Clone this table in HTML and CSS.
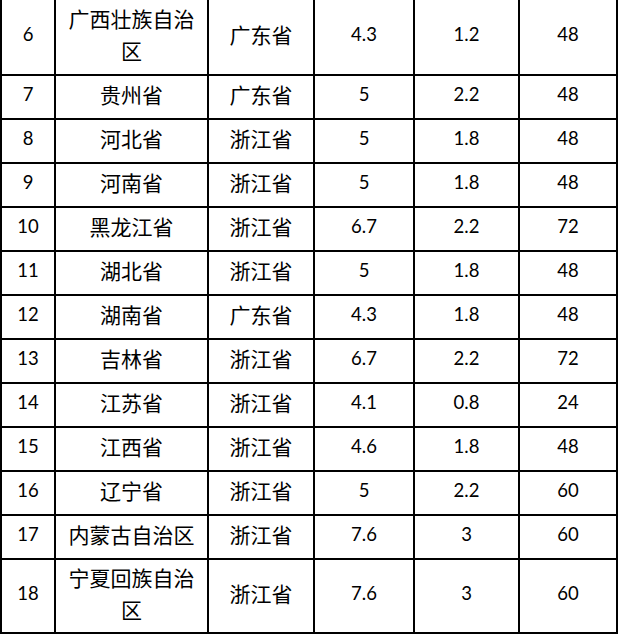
FILE: index.html
```html
<!DOCTYPE html>
<html lang="zh-CN">
<head>
<meta charset="utf-8">
<title>省份表</title>
<link rel="stylesheet" href="styles.css">
</head>
<body>
<table class="grid">
  <colgroup>
    <col class="c1"><col class="c2"><col class="c3"><col class="c4"><col class="c5"><col class="c6">
  </colgroup>
  <tbody>
    <tr class="tall first"><td class="num">6</td><td class="cjk">广西壮族自治区</td><td class="cjk">广东省</td><td class="num">4.3</td><td class="num">1.2</td><td class="num">48</td></tr>
    <tr><td class="num">7</td><td class="cjk">贵州省</td><td class="cjk">广东省</td><td class="num">5</td><td class="num">2.2</td><td class="num">48</td></tr>
    <tr><td class="num">8</td><td class="cjk">河北省</td><td class="cjk">浙江省</td><td class="num">5</td><td class="num">1.8</td><td class="num">48</td></tr>
    <tr><td class="num">9</td><td class="cjk">河南省</td><td class="cjk">浙江省</td><td class="num">5</td><td class="num">1.8</td><td class="num">48</td></tr>
    <tr><td class="num">10</td><td class="cjk">黑龙江省</td><td class="cjk">浙江省</td><td class="num">6.7</td><td class="num">2.2</td><td class="num">72</td></tr>
    <tr><td class="num">11</td><td class="cjk">湖北省</td><td class="cjk">浙江省</td><td class="num">5</td><td class="num">1.8</td><td class="num">48</td></tr>
    <tr><td class="num">12</td><td class="cjk">湖南省</td><td class="cjk">广东省</td><td class="num">4.3</td><td class="num">1.8</td><td class="num">48</td></tr>
    <tr><td class="num">13</td><td class="cjk">吉林省</td><td class="cjk">浙江省</td><td class="num">6.7</td><td class="num">2.2</td><td class="num">72</td></tr>
    <tr><td class="num">14</td><td class="cjk">江苏省</td><td class="cjk">浙江省</td><td class="num">4.1</td><td class="num">0.8</td><td class="num">24</td></tr>
    <tr><td class="num">15</td><td class="cjk">江西省</td><td class="cjk">浙江省</td><td class="num">4.6</td><td class="num">1.8</td><td class="num">48</td></tr>
    <tr><td class="num">16</td><td class="cjk">辽宁省</td><td class="cjk">浙江省</td><td class="num">5</td><td class="num">2.2</td><td class="num">60</td></tr>
    <tr><td class="num">17</td><td class="cjk">内蒙古自治区</td><td class="cjk">浙江省</td><td class="num">7.6</td><td class="num">3</td><td class="num">60</td></tr>
    <tr class="tall last"><td class="num">18</td><td class="cjk">宁夏回族自治区</td><td class="cjk">浙江省</td><td class="num">7.6</td><td class="num">3</td><td class="num">60</td></tr>
  </tbody>
</table>
</body>
</html>
```
FILE: styles.css
```css
html, body {
  margin: 0;
  padding: 0;
  background: #fff;
}

.grid {
  border-collapse: collapse;
  table-layout: fixed;
  width: 618px;
  border: 2px solid #000;
  border-top: none;
  color: #000;
}

.c1 { width: 54px; }
.c2 { width: 153px; }
.c3 { width: 106px; }
.c4 { width: 100px; }
.c5 { width: 105px; }
.c6 { width: 98px; }

.grid td {
  border: 2px solid #000;
  padding: 0 6px 6px;
  text-align: center;
  vertical-align: middle;
  height: 36px;
}

.grid tr.first td {
  border-top: none;
}

.grid tr.tall td {
  height: 68px;
}

.grid tr.last td {
  height: 66px;
}

.cjk {
  font-family: "Noto Sans CJK SC", "Noto Sans", sans-serif;
  font-size: 21px;
  line-height: 32px;
}

.num {
  font-family: "Lato", "Noto Sans", sans-serif;
  font-size: 18.5px;
  line-height: 32px;
}
```
